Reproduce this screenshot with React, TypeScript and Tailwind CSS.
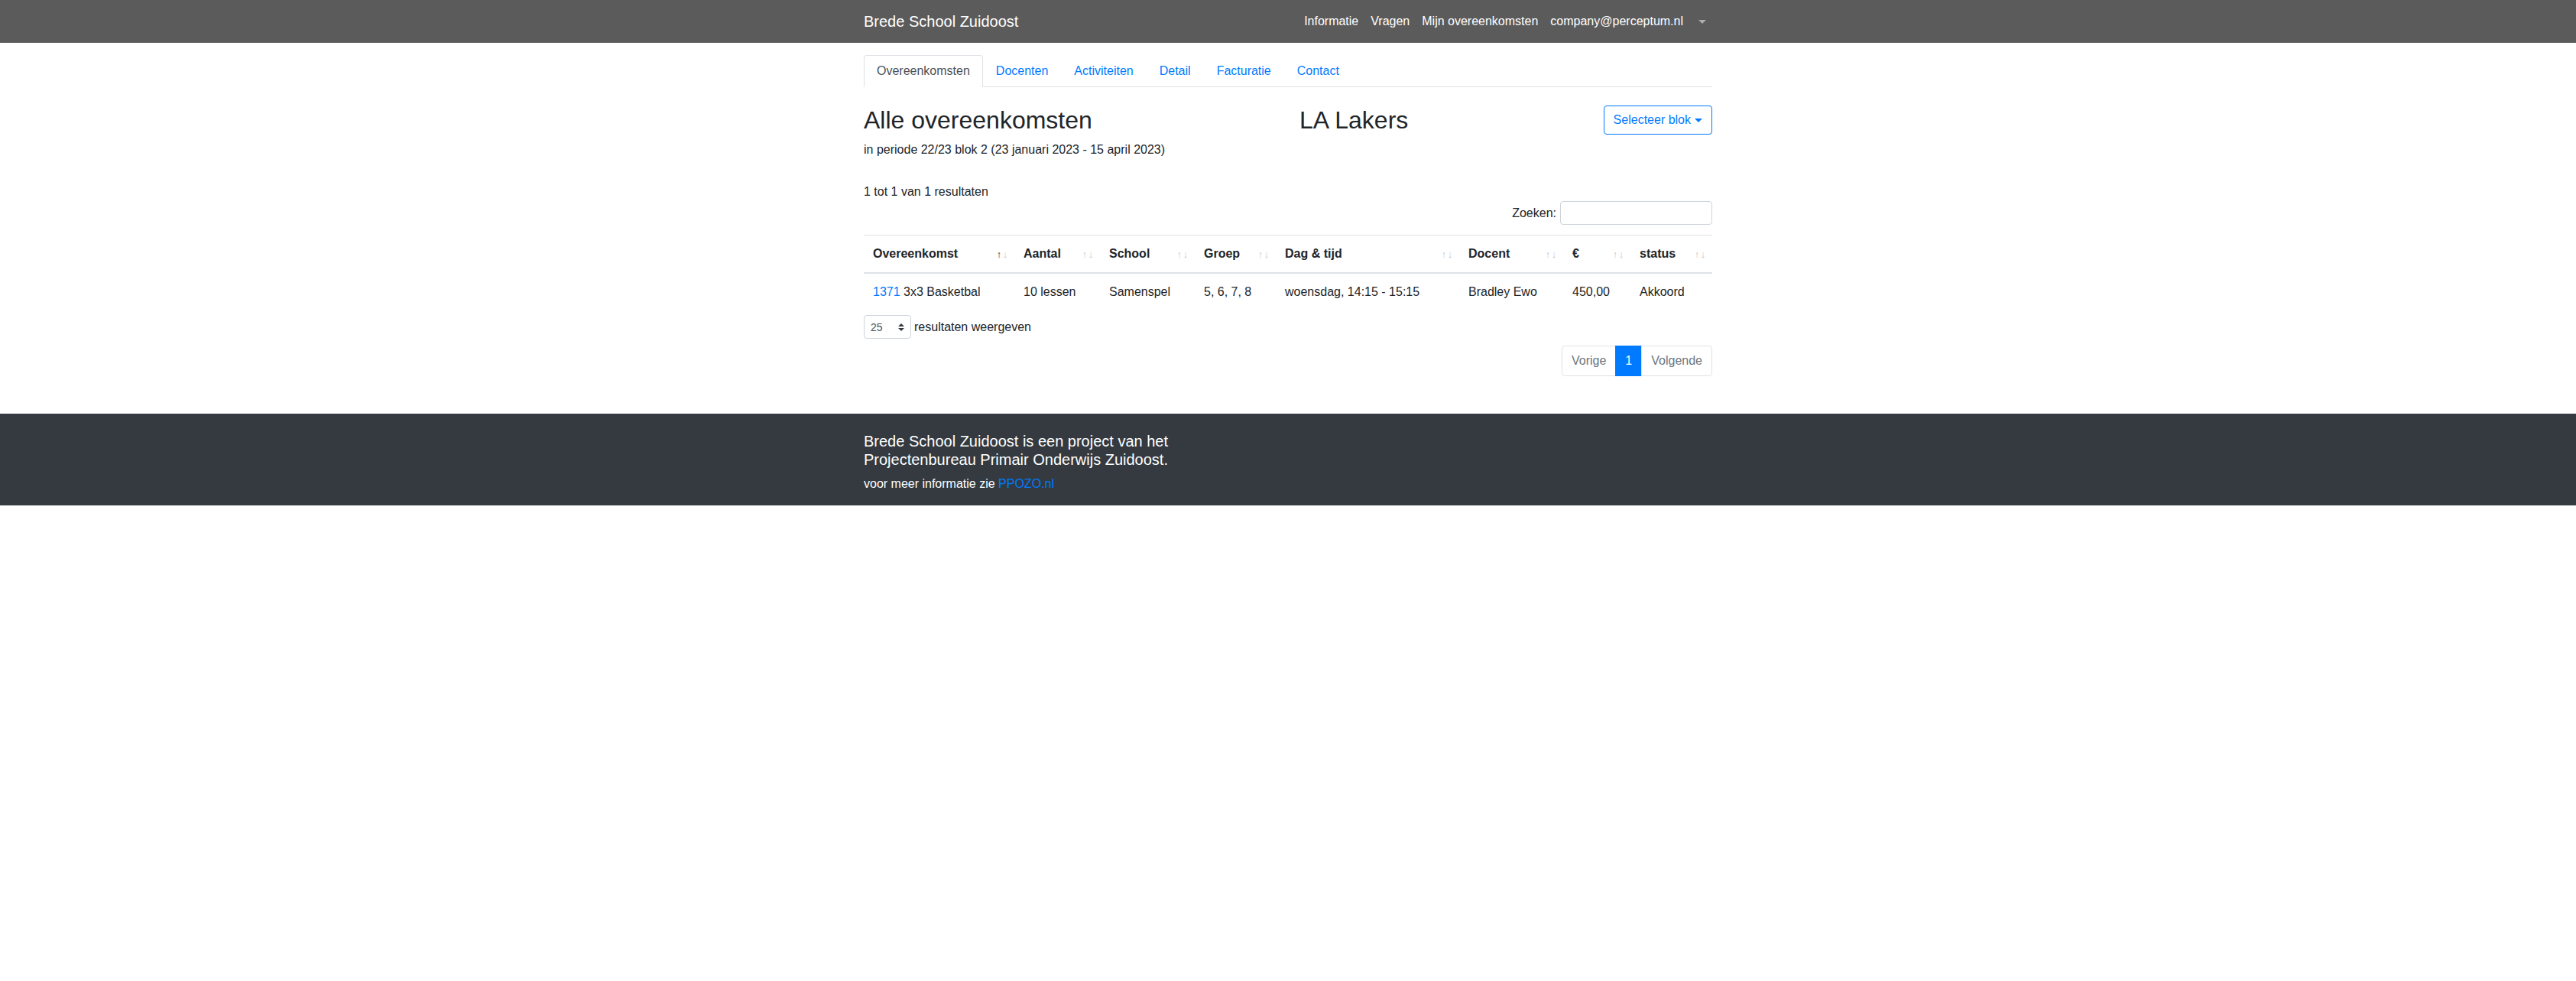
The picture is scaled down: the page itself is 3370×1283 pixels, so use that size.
import React from "react";

const cols = [
  { label: "Overeenkomst", w: 197, sorted: true },
  { label: "Aantal", w: 112 },
  { label: "School", w: 124 },
  { label: "Groep", w: 106 },
  { label: "Dag & tijd", w: 240 },
  { label: "Docent", w: 136 },
  { label: "€", w: 88 },
  { label: "status", w: 107 },
];

function Caret({ className }: { className: string }) {
  return (
    <span
      className={
        "inline-block w-0 h-0 border-t-[5px] border-x-[5px] border-x-transparent align-middle " +
        className
      }
    />
  );
}

export default function App() {
  return (
    <div className="min-h-screen bg-white font-['Liberation_Sans',Arial,sans-serif] text-base leading-6 text-[#212529]">
      {/* Navbar */}
      <nav className="h-14 bg-[#5b5b5b]">
        <div className="mx-auto flex h-full w-[1140px] items-center px-[15px]">
          <a className="text-xl leading-[30px] text-white">Brede School Zuidoost</a>
          <ul className="ml-auto flex items-center">
            <li className="px-2 text-white">Informatie</li>
            <li className="px-2 text-white">Vragen</li>
            <li className="px-2 text-white">Mijn overeenkomsten</li>
            <li className="px-2 text-white">company@perceptum.nl</li>
            <li className="flex items-center px-2 py-2">
              <Caret className="ml-[4px] border-t-white/50" />
            </li>
          </ul>
        </div>
      </nav>

      {/* Main */}
      <main className="mx-auto w-[1140px] px-[15px] pt-4">
        <ul className="flex border-b border-[#dee2e6]">
          <li className="-mb-px rounded-t border border-[#dee2e6] border-b-white bg-white px-4 py-2 text-[#495057]">
            Overeenkomsten
          </li>
          {["Docenten", "Activiteiten", "Detail", "Facturatie", "Contact"].map((t) => (
            <li key={t} className="-mb-px border border-transparent px-4 py-2 text-[#007bff]">
              {t}
            </li>
          ))}
        </ul>

        <div className="mt-6 grid grid-cols-2 gap-[30px]">
          <div>
            <h2 className="mb-2 text-[32px] font-normal leading-[1.2]">Alle overeenkomsten</h2>
            <p className="mb-4">in periode 22/23 blok 2 (23 januari 2023 - 15 april 2023)</p>
          </div>
          <div className="flex items-start">
            <h2 className="text-[32px] font-normal leading-[1.2]">LA Lakers</h2>
            <button className="ml-auto flex h-[38px] items-center rounded border border-[#007bff] px-3 text-[#007bff]">
              Selecteer blok
              <Caret className="ml-[5px] border-t-[#007bff]" />
            </button>
          </div>
        </div>

        <div className="mt-[15px]">1 tot 1 van 1 resultaten</div>

        <div className="flex items-center justify-end">
          <label className="mr-1">Zoeken:</label>
          <input className="ml-px h-[31px] w-[199px] rounded border border-[#ced4da] bg-white px-2 text-sm outline-none" />
        </div>

        <table className="mt-[13px] w-full table-fixed border-collapse">
          <colgroup>
            {cols.map((c) => (
              <col key={c.label} style={{ width: c.w }} />
            ))}
          </colgroup>
          <thead>
            <tr>
              {cols.map((c) => (
                <th
                  key={c.label}
                  className="border-b-2 border-t border-[#dee2e6] py-3 pl-3 pr-2 text-left font-bold"
                >
                  <div className="flex items-center">
                    <span>{c.label}</span>
                    <span className="ml-auto flex text-[13px] leading-none text-[#212529]">
                      <span className={"w-2 text-center " + (c.sorted ? "opacity-100" : "opacity-30")}>↑</span>
                      <span className="w-2 text-center opacity-30">↓</span>
                    </span>
                  </div>
                </th>
              ))}
            </tr>
          </thead>
          <tbody>
            <tr>
              <td className="border-t border-[#dee2e6] p-3">
                <a className="text-[#007bff]">1371</a> 3x3 Basketbal
              </td>
              <td className="border-t border-[#dee2e6] p-3">10 lessen</td>
              <td className="border-t border-[#dee2e6] p-3">Samenspel</td>
              <td className="border-t border-[#dee2e6] p-3">5, 6, 7, 8</td>
              <td className="border-t border-[#dee2e6] p-3">woensdag, 14:15 - 15:15</td>
              <td className="border-t border-[#dee2e6] p-3">Bradley Ewo</td>
              <td className="border-t border-[#dee2e6] p-3">450,00</td>
              <td className="border-t border-[#dee2e6] p-3">Akkoord</td>
            </tr>
          </tbody>
        </table>

        <div className="mt-[6px] flex items-center">
          <div className="flex h-[31px] w-[62px] items-center rounded border border-[#ced4da] pl-2 pr-2 text-sm text-[#495057]">
            <span>25</span>
            <svg className="ml-auto" width="8" height="10" viewBox="0 0 4 5">
              <path d="M2 0L0 2h4zm0 5L0 3h4z" fill="#343a40" />
            </svg>
          </div>
          <span className="ml-1">resultaten weergeven</span>
        </div>

        <div className="mt-[9px] flex justify-end">
          <ul className="flex">
            <li className="rounded-l border border-[#dee2e6] bg-white px-3 py-[7px] text-[#6c757d]">Vorige</li>
            <li className="-ml-px border border-[#007bff] bg-[#007bff] px-3 py-[7px] text-white">1</li>
            <li className="-ml-px rounded-r border border-[#dee2e6] bg-white px-3 py-[7px] text-[#6c757d]">Volgende</li>
          </ul>
        </div>
      </main>

      {/* Footer */}
      <footer className="mt-[49px] bg-[#343a40] pb-4 pt-6">
        <div className="mx-auto w-[1140px] px-[15px]">
          <h5 className="mb-2 text-xl font-normal leading-[1.2] text-white">
            Brede School Zuidoost is een project van het
            <br />
            Projectenbureau Primair Onderwijs Zuidoost.
          </h5>
          <p className="text-white">
            voor meer informatie zie <a className="text-[#007bff]">PPOZO.nl</a>
          </p>
        </div>
      </footer>
    </div>
  );
}
